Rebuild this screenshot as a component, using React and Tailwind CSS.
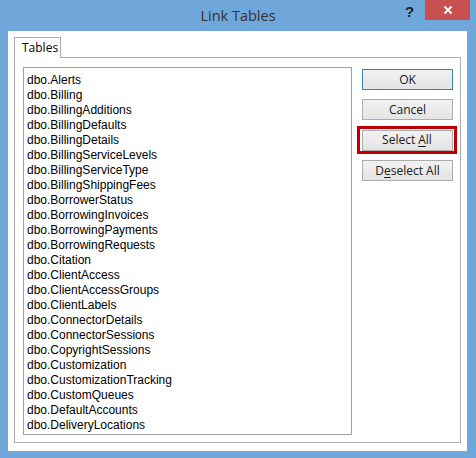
import React from "react";

const items = [
  "dbo.Alerts","dbo.Billing","dbo.BillingAdditions","dbo.BillingDefaults","dbo.BillingDetails",
  "dbo.BillingServiceLevels","dbo.BillingServiceType","dbo.BillingShippingFees","dbo.BorrowerStatus",
  "dbo.BorrowingInvoices","dbo.BorrowingPayments","dbo.BorrowingRequests","dbo.Citation",
  "dbo.ClientAccess","dbo.ClientAccessGroups","dbo.ClientLabels","dbo.ConnectorDetails",
  "dbo.ConnectorSessions","dbo.CopyrightSessions","dbo.Customization","dbo.CustomizationTracking",
  "dbo.CustomQueues","dbo.DefaultAccounts","dbo.DeliveryLocations",
];

function Btn({ children, def }) {
  return (
    <div
      className={`h-[21px] w-[91px] shrink-0 flex items-center justify-center border text-[12px] text-[#1a1a1a] bg-gradient-to-b from-[#f2f2f2] to-[#e4e4e4] ${def ? "border-[#3c7fb1]" : "border-[#acacac]"}`}
      style={{ fontFamily: '"Open Sans", "Noto Sans", sans-serif' }}
    >
      {children}
    </div>
  );
}

export default function App() {
  return (
    <div className="w-[476px] h-[458px] bg-[#6fa7db] flex flex-col overflow-hidden">
      <div className="h-[31px] relative flex items-center justify-center shrink-0">
        <span
          className="text-[14.5px] text-[#333] leading-none mt-[2px]"
          style={{ fontFamily: '"Open Sans", "Noto Sans", sans-serif' }}
        >
          Link Tables
        </span>
        <span
          className="absolute left-[405px] top-[4px] text-[15px] font-bold text-[#222] leading-none"
          style={{ fontFamily: '"Liberation Sans", Arial, sans-serif' }}
        >
          ?
        </span>
        <div className="absolute left-[425px] top-0 w-[45px] h-[20px] bg-[#c75050] flex items-center justify-center">
          <svg width="10" height="10" viewBox="0 0 10 10">
            <path d="M1.5 1.5 L8.5 8.5 M8.5 1.5 L1.5 8.5" stroke="#fff" strokeWidth="2" />
          </svg>
        </div>
      </div>
      <div className="ml-[8px] mr-[9px] mb-[7px] flex-1 bg-white pt-[6px] pl-[6px] pr-[6px] pb-[8px] flex flex-col">
        <div className="flex">
          <div
            className="h-[21px] w-[47px] border border-b-0 border-[#adadad] bg-white flex items-center pl-[7px] text-[12px] text-black relative z-10 mb-[-1px]"
            style={{ fontFamily: '"Open Sans", "Noto Sans", sans-serif' }}
          >
            Tables
          </div>
        </div>
        <div className="flex-1 border border-[#adadad] flex pt-[9px] pl-[8px] pr-[7px] pb-[7px]">
          <div
            className="w-[329px] shrink-0 border border-[#a0a0a0] pt-[5px] pl-[3px] text-[12px] leading-[15px] text-black"
            style={{ fontFamily: '"Liberation Sans", Arial, sans-serif' }}
          >
            {items.map((t) => (
              <div key={t}>{t}</div>
            ))}
          </div>
          <div className="ml-[10px] w-[91px] shrink-0 flex flex-col pt-[2px]">
            <Btn def>OK</Btn>
            <div className="h-[9px]" />
            <Btn>Cancel</Btn>
            <div className="h-[6px]" />
            <div className="w-[100px] h-[28px] shrink-0 border-[3px] border-[#c00000] ml-[-5px] mr-[-4px] flex items-center justify-center">
              <Btn>
                Select <span className="underline underline-offset-2 ml-[3px]">A</span>ll
              </Btn>
            </div>
            <div className="h-[6px]" />
            <Btn>
              D<span className="underline underline-offset-2">e</span>select All
            </Btn>
          </div>
        </div>
      </div>
    </div>
  );
}
